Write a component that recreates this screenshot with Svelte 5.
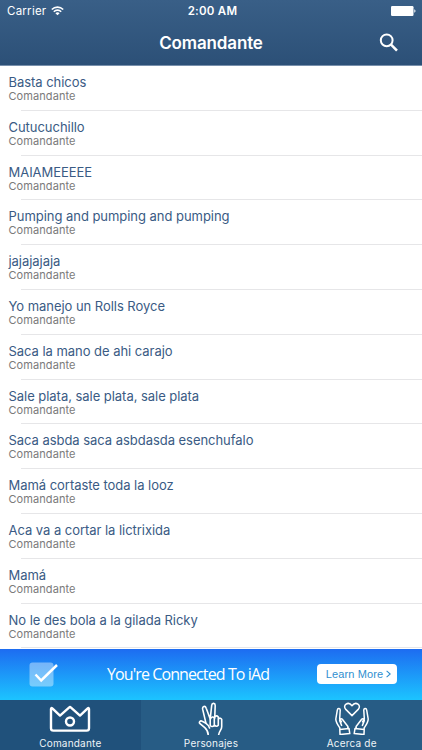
<!-- App.svelte -->
<script>
    const sounds = [
        'Basta chicos',
        'Cutucuchillo',
        'MAIAMEEEEE',
        'Pumping and pumping and pumping',
        'jajajajaja',
        'Yo manejo un Rolls Royce',
        'Saca la mano de ahi carajo',
        'Sale plata, sale plata, sale plata',
        'Saca asbda saca asbdasda esenchufalo',
        'Mamá cortaste toda la looz',
        'Aca va a cortar la lictrixida',
        'Mamá',
        'No le des bola a la gilada Ricky'
    ];

    const tabs = [
        { id: 'comandante', label: 'Comandante' },
        { id: 'personajes', label: 'Personajes' },
        { id: 'acerca', label: 'Acerca de' }
    ];

    let currentTab = $state('comandante');
</script>

<div class="screen">
    <header>
        <div class="status-bar">
            <div class="carrier">
                <span>Carrier</span>
                <svg width="13" height="10" viewBox="0 0 13 10" fill="none" stroke="#fff" stroke-width="1.6">
                    <path d="M0.8 3.5a8.1 8.1 0 0 1 11.4 0" />
                    <path d="M2.8 5.7a5.2 5.2 0 0 1 7.4 0" />
                    <path d="M6.5 9.2L4.4 7.2a3 3 0 0 1 4.2 0z" fill="#fff" stroke="none" />
                </svg>
            </div>
            <span class="time">2:00 AM</span>
            <svg class="battery" width="25" height="10" viewBox="0 0 25 10" fill="#fff">
                <rect width="22.5" height="10" rx="1.2" />
                <path d="M23.3 3.3c1.6.5 1.6 2.9 0 3.4z" />
            </svg>
        </div>
        <div class="nav-bar">
            <h1>Comandante</h1>
            <button class="search" aria-label="Buscar">
                <svg width="20" height="20" viewBox="0 0 20 20" fill="none" stroke="#fff">
                    <circle cx="7.7" cy="7.3" r="5.9" stroke-width="2" />
                    <path d="M11.8 11.4L18 17.6" stroke-width="2.6" />
                </svg>
            </button>
        </div>
    </header>

    <ul class="sounds">
        {#each sounds as sound}
            <li>
                <span class="title">{sound}</span>
                <span class="author">Comandante</span>
            </li>
        {/each}
    </ul>

    <div class="ad">
        <svg class="check" width="30" height="26" viewBox="0 0 30 26" fill="none">
            <rect x="0.5" y="0.5" width="24" height="24" rx="3" fill="#fff" fill-opacity="0.4" />
            <path d="M6.5 12.5l5.7 6L28 3" stroke="#fff" stroke-width="2.5" />
        </svg>
        <span class="ad-text">You're Connected To iAd</span>
        <button class="learn-more">
            Learn More
            <svg width="5" height="8" viewBox="0 0 5 8" fill="none" stroke="#2f8fd0" stroke-width="1.1">
                <path d="M0.6 0.8L4.2 4 0.6 7.2" />
            </svg>
        </button>
    </div>

    <nav class="tabs">
        {#each tabs as tab}
            <button class="tab" class:active={currentTab === tab.id} onclick={() => (currentTab = tab.id)}>
                {#if tab.id === 'comandante'}
                    <svg width="42" height="34" viewBox="0 0 42 34" stroke-width="2.4">
                        <path d="M2 8.1Q2 6.2 3.6 7.6L11 14.6 20 6.6Q21 5.6 22 6.6L31 14.6 38.4 7.6Q40 6.2 40 8.1V27.2Q40 29.6 37.6 29.6H4.4Q2 29.6 2 27.2Z" />
                        <circle cx="21" cy="20.5" r="4" />
                    </svg>
                {:else if tab.id === 'personajes'}
                    <svg width="26" height="34" viewBox="0 0 26 34" stroke-width="1.6">
                        <path d="M10.2 34C10.2 30.8 9.3 29 6.8 26.7L2 22.7C.5 21 2.4 19.2 4.2 20.3L8 22.4 4.7 8.4C4 5.1 7.2 4.2 8.2 7.2L12.2 18 13.7 4.4C14 1.6 17.3 1.8 17.2 4.7L16.7 17.2" />
                        <path d="M12.2 18.4v6q2 2.3 4.1 0V17q-2-2.5-4.1 1.4zM16.6 15.9q2-2 3.7 0v8.3q-1.8 2-3.9 0M20.4 17.8q2.2-1.5 3.3.5v7.4c0 3.2-2.4 3.8-3 8" />
                        <path d="M8 22.4c2 1.4 3.2 2.6 3.6 4.6" />
                    </svg>
                {:else}
                    <svg width="34" height="34" viewBox="0 0 34 34" stroke-width="1.5">
                        <path d="M17 14.6L10.8 8.4C7 4.2 13.2-.3 17 4.7 20.8-.3 27 4.2 23.2 8.4Z" />
                        <path d="M4.8 28.2V26.8C3.2 24.5.8 21.5.8 18L2.3 9.1C2.7 6.7 5.5 7.2 5.2 9.5L4.7 17.8 6.5 20.8M6.6 24.4L4.8 20c-.5-2.2 1.5-3.2 2.9-1.3l5.2 6.8v2.2M4.8 28.4l9.2-1 .8 5.2-9.8.9z" />
                        <path d="M29.2 28.2V26.8C30.8 24.5 33.2 21.5 33.2 18L31.7 9.1C31.3 6.7 28.5 7.2 28.8 9.5L29.3 17.8 27.5 20.8M27.4 24.4L29.2 20c.5-2.2-1.5-3.2-2.9-1.3l-5.2 6.8v2.2M29.2 28.4l-9.2-1-.8 5.2 9.8.9z" />
                    </svg>
                {/if}
                <span>{tab.label}</span>
            </button>
        {/each}
    </nav>
</div>

<style>
    :global(body) {
        margin: 0;
    }

    .screen {
        display: flex;
        flex-direction: column;
        width: 422px;
        height: 750px;
        overflow: hidden;
        background: #fff;
        font-family: Inter, 'Liberation Sans', sans-serif;
    }

    button {
        padding: 0;
        border: none;
        background: none;
        font-family: inherit;
    }

    header {
        flex: none;
        box-sizing: border-box;
        height: 66px;
        border-bottom: 1px solid #7890ac;
        background: linear-gradient(#395f87, #2c5077);
        background-clip: padding-box;
        color: #fff;
    }

    .status-bar {
        display: grid;
        grid-template-columns: 1fr auto 1fr;
        align-items: center;
        height: 22px;
        padding: 0 6px 0 7px;
        font-size: 11.5px;
        letter-spacing: 0.25px;
    }

    .carrier {
        display: flex;
        align-items: center;
        gap: 5px;
    }

    .time {
        padding-left: 2px;
        font-weight: 600;
    }

    .battery {
        justify-self: end;
    }

    .nav-bar {
        display: grid;
        grid-template-columns: 1fr auto 1fr;
        align-items: center;
        height: 41px;
        padding: 0 23px;
    }

    h1 {
        grid-column: 2;
        margin: 0;
        font-size: 17px;
        font-weight: 600;
        letter-spacing: -0.15px;
    }

    .search {
        justify-self: end;
        height: 20px;
    }

    svg {
        display: block;
        flex: none;
    }

    .sounds {
        flex: none;
        height: 583px;
        margin: 0;
        padding: 0;
        overflow: hidden;
        list-style: none;
    }

    li {
        display: flex;
        flex-direction: column;
        box-sizing: border-box;
        height: 44.8px;
        padding: 8px 0 0 8.5px;
        /* divider is inset from the left edge */
        background: linear-gradient(#e6e6e8, #e6e6e8) 21px 100% / 100% 1px no-repeat;
        white-space: nowrap;
    }

    .title {
        color: #3a5b84;
        font-size: 13px;
        line-height: 16px;
        letter-spacing: -0.04px;
    }

    .author {
        color: #7a7a7a;
        font-size: 11px;
        line-height: 13px;
        letter-spacing: 0.08px;
    }

    .ad {
        display: flex;
        flex: none;
        align-items: center;
        height: 51px;
        background: linear-gradient(#1d6cf1, #1cc4ff);
    }

    .check {
        margin-left: 29px;
    }

    .ad-text {
        width: 164px;
        margin: 0 46px 2px 48px;
        color: #fff;
        font-family: 'Open Sans', 'Noto Sans', sans-serif;
        font-size: 16px;
        letter-spacing: -0.9px;
        white-space: nowrap;
    }

    .learn-more {
        display: flex;
        align-items: center;
        justify-content: center;
        gap: 3px;
        box-sizing: border-box;
        width: 80px;
        height: 20px;
        margin-bottom: 1px;
        padding-left: 3px;
        border-radius: 4px;
        background: #fff;
        color: #2f8fd0;
        font-family: 'Liberation Sans', sans-serif;
        font-size: 11px;
        letter-spacing: 0.1px;
    }

    .tabs {
        display: grid;
        flex: none;
        grid-template-columns: repeat(3, 1fr);
        height: 50px;
        background: #275c85;
    }

    .tab {
        display: flex;
        flex-direction: column;
        align-items: center;
        gap: 2px;
        padding-top: 1px;
        color: #eef4f8;
        font-size: 10px;
        line-height: 12px;
        letter-spacing: 0.2px;
    }

    .tab.active {
        background: #20517b;
    }

    .tab svg {
        fill: none;
        stroke: #fff;
        stroke-linecap: round;
        stroke-linejoin: round;
    }
</style>
